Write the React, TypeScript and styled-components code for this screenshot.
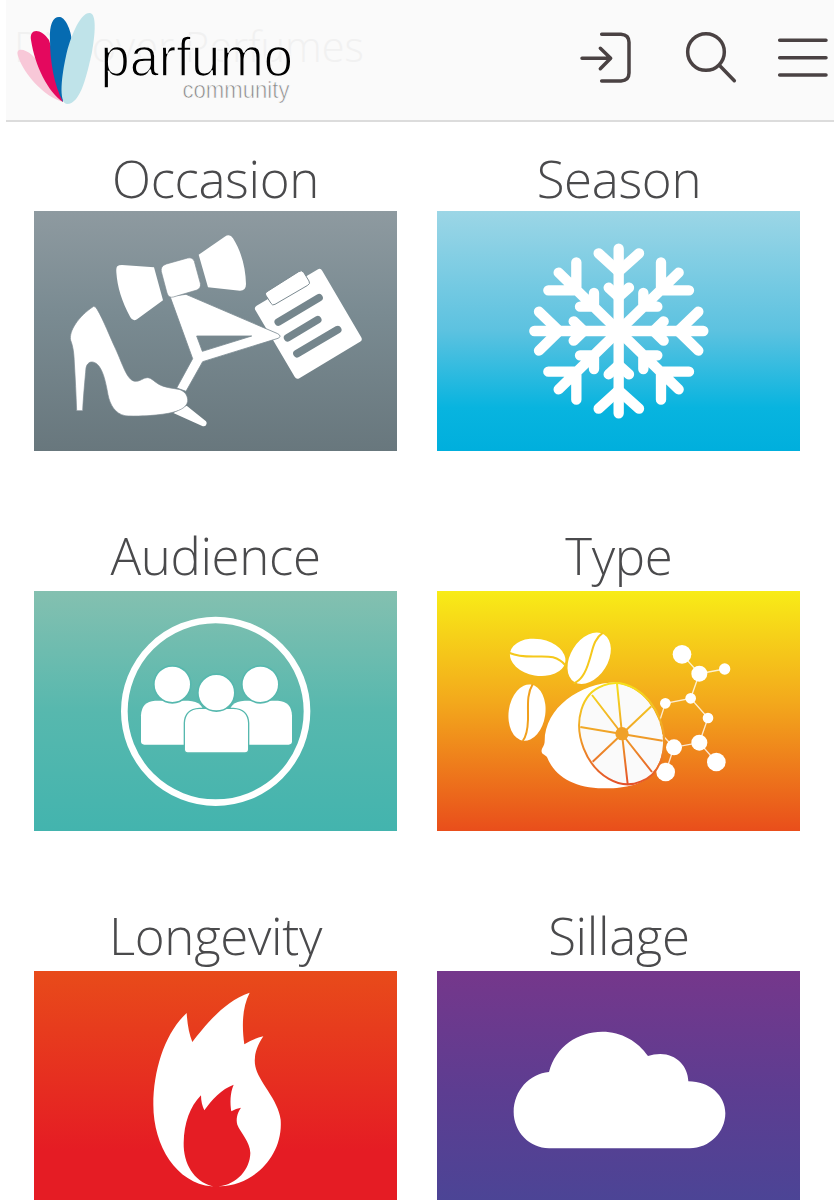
import React from "react";
import styled, { createGlobalStyle } from "styled-components";

const GlobalStyle = createGlobalStyle`
  * { box-sizing: border-box; }
  html, body { margin: 0; background: #fff; }
  body { font-family: "Open Sans", "Noto Sans", sans-serif; }
`;

const Page = styled.div`
  width: 834px;
  height: 1200px;
  padding-left: 6px;
  overflow: hidden;
  background: #fff;
`;

const Header = styled.header`
  position: relative;
  display: flex;
  justify-content: space-between;
  height: 122px;
  background: #fafafa;
  border-bottom: 2px solid #dcdcdc;
`;

const FadedTitle = styled.h1`
  position: absolute;
  left: 8px;
  top: 18px;
  margin: 0;
  font-size: 41.500px;
  line-height: 56px;
  font-weight: 300;
  white-space: nowrap;
  color: #f1f1f1;
`;

const Logo = styled.svg`
  position: relative;
  display: block;
  width: 300px;
  height: 120px;
`;

const Actions = styled.nav`
  display: flex;
  align-items: flex-start;
  padding: 31px 4px 0 0;
`;

const ActionButton = styled.button<{ $gap?: number; $drop?: number }>`
  display: block;
  padding: 0;
  border: 0;
  background: none;
  margin: ${(p) => p.$drop ?? 0}px 0 0 ${(p) => p.$gap ?? 0}px;
  svg {
    display: block;
    fill: none;
    stroke: #4a4243;
    stroke-width: 10.5;
    stroke-linecap: round;
    stroke-linejoin: round;
  }
`;

const Grid = styled.main`
  display: grid;
  grid-template-columns: 363px 363px;
  column-gap: 40.4px;
  row-gap: 73px;
  padding: 25px 0 0 28px;
`;

const Category = styled.section`
  display: flex;
  flex-direction: column;
`;

const Label = styled.h2<{ $space: number }>`
  position: relative;
  top: 1px;
  margin: 0 0 ${(p) => p.$space}px;
  font-size: 51px;
  letter-spacing: -0.35px;
  line-height: 60px;
  font-weight: 300;
  text-align: center;
  color: #4a4a4c;
`;

const Tile = styled.div<{ $fill: string }>`
  height: 240px;
  background: linear-gradient(to bottom, ${(p) => p.$fill});
  svg {
    display: block;
    width: 363px;
    height: 240px;
  }
`;

const OccasionArt = () => (
  <svg viewBox="12 184 1089 720" fill="#fff">
    <path d="M868 368L985 568L803 677L685 477Z" stroke="#fff" strokeWidth="20" strokeLinejoin="round" />
    <path d="M711 426L806 366Q815 360 821 368L837 394Q842 402 833 407L735 464Q727 469 723 461L707 436Q704 430 711 426Z" stroke="#7b8a91" strokeWidth="3" />
    <g stroke="#75868d" strokeWidth="23" strokeLinecap="round">
      <path d="M745 517L867 444M773 564L863 510M801 612L923 540" />
    </g>
    <path fillRule="evenodd" stroke="#7b8a91" strokeWidth="2.5" d="M420 440L468 434L743 552Q757 560 744 566L518 636L468 725L440 715L488 627ZM500 559L517 605L665 559Z" />
    <path d="M430 790L470 768L528 815Q533 821 528 827Q523 832 515 828Z" />
    <path d="M262 350Q266 346 276 346L372 353L399 452L321 509Q309 517 301 503C275 455 262 412 259 368Q258 354 262 350Z" />
    <path d="M506 315L584 261Q600 251 609 266C634 305 647 355 648 403Q648 423 630 423L534 413Z" />
    <path stroke="#7b8a91" strokeWidth="2" d="M409 343L473 325Q488 322 493 335L511 401Q514 415 501 421L430 442Q416 446 411 430L394 366Q390 350 409 343Z" />
    <path stroke="#7b8a91" strokeWidth="2" d="M191 470Q197 470 202 480C219 508 241 564 256 596C278 643 290 692 315 695C332 696 338 684 352 684C366 684 372 698 395 708C415 716 435 716 450 720C468 727 474 742 473 755C470 775 445 785 415 791C370 799 310 801 285 798C255 792 240 765 234 735C226 690 218 660 203 645C190 632 172 634 168 655C165 690 160 740 158 783L140 783C138 730 136 690 133 640C132 610 129 590 122 572C116 545 145 500 191 470Z" />
  </svg>
);

/* One quadrant arm, mirrored horizontally and vertically around the centre. */
const DiagonalArm = ({ flip }: { flip: string }) => (
  <path transform={`translate(567 544) scale(${flip})`} d="M0 0L-180-175M-127-206V-122H-211M-74-114V-73H-116M-74-96L-96-73" />
);

const SeasonArt = () => (
  <svg viewBox="22 184 1089 720" fill="none" stroke="#fff" strokeWidth="31" strokeLinecap="round" strokeLinejoin="round">
    <path d="M567 297V791M314 544H821" />
    <path d="M507 311L567 366L628 311M507 777L567 722L628 777" />
    <path d="M537 414L567 442L598 414M537 674L567 646L598 674" />
    <path d="M328 486L388 544L328 603M806 486L746 544L806 603" />
    <path d="M432 515L462 544L432 573M702 515L672 544L702 573" />
    <path d="M547 524L587 564M587 524L547 564" />
    {["1 1", "-1 1", "1 -1", "-1 -1"].map((f) => (
      <DiagonalArm key={f} flip={f} />
    ))}
  </svg>
);

const AudienceArt = () => (
  <svg viewBox="12 214 1089 720" fill="#fff">
    <circle cx="557" cy="575" r="274" fill="none" stroke="#fff" strokeWidth="20" />
    <path d="M375 543H475Q523 545 523 590V675H343Q333 675 333 665V587Q335 545 375 543Z" />
    <path d="M744 543H644Q596 545 596 590V675H776Q786 675 786 665V587Q784 545 744 543Z" />
    <g stroke="#56b8ae" strokeWidth="5">
      <circle cx="427" cy="494" r="55.5" />
      <circle cx="691" cy="494" r="55.5" />
      <path strokeWidth="4" d="M508 566H610Q654 568 656 610V689Q656 700 645 700H473Q463 700 463 689V610Q465 568 508 566Z" />
      <circle cx="559" cy="519" r="55.5" />
    </g>
  </svg>
);

const ATOMS = [
  [757, 404, 28], [809, 462, 24], [885, 448, 17], [783, 536, 16], [707, 551, 16],
  [835, 595, 16], [809, 669, 24], [860, 727, 28], [733, 683, 24], [708, 757, 28],
];

const TypeArt = () => (
  <svg viewBox="22 214 1089 720" fill="#fff">
    <defs>
      <linearGradient id="zest" gradientUnits="userSpaceOnUse" x1="575" y1="490" x2="575" y2="794">
        <stop offset="0" stopColor="#f6e11c" />
        <stop offset="0.5" stopColor="#f0a128" />
        <stop offset="1" stopColor="#e4512a" />
      </linearGradient>
    </defs>
    <ellipse cx="324" cy="413" rx="84" ry="55" transform="rotate(10 324 413)" />
    <ellipse cx="478.500" cy="416" rx="84" ry="56" transform="rotate(-58 478.500 416)" />
    <ellipse cx="292" cy="579" rx="55" ry="85" transform="rotate(8 292 579)" />
    <g fill="none" strokeWidth="6">
      <path stroke="#f5c81b" d="M240 400C285 420 335 405 370 413C390 418 400 428 408 438" />
      <path stroke="#f5c81b" d="M520 339C490 360 490 390 478 425C468 460 455 483 432 491" />
      <path stroke="#f1a01c" d="M309 494C290 525 296 560 295 600C294 630 290 650 279 664" />
    </g>
    <path stroke="#fff" strokeOpacity="0.8" strokeWidth="4" fill="none" d="M757 404L809 462L885 448M809 462L783 536L707 551L688 610M783 536L835 595L809 669L860 727M809 669L733 683L688 636M733 683L708 757" />
    {ATOMS.map(([x, y, r]) => (
      <circle key={`${x}-${y}`} cx={x} cy={y} r={r} />
    ))}
    <path d="M560 488C450 490 345 565 345 665C345 680 334 686 336 697C338 705 349 706 353 714C375 770 435 806 520 806C575 806 632 800 668 762L600 560Z" />
    <g stroke="url(#zest)" strokeWidth="6">
      <ellipse cx="576" cy="642" rx="118.700" ry="154.700" transform="rotate(-21.500 576 642)" fill="#fafafa" stroke="none" />
      <path
        fill="none"
        d="M519.400 498.100A118.700 154.700 -21.500 1 1 632.600 785.900A118.700 154.700 -21.500 1 1 519.400 498.100Z"
      />
      <path d="M577 643L562 492M577 643L665 560M577 643L699 663M577 643L667 757M577 643L594 793M577 643L489 726M577 643L452 622M577 643L487 526" />
    </g>
    <circle cx="577" cy="642" r="20" fill="#f0a128" />
  </svg>
);

const LongevityArt = () => (
  <svg viewBox="12 214 1089 720" fill="#fff">
    <path d="M470 340C472 375 478 405 487 427C520 385 580 305 659 279C635 325 636 385 643 434Q670 417 700 410C680 440 670 470 676 500C684 545 745 600 752 660C760 770 670 857 570 860H545C440 850 370 740 370 615C370 510 405 400 470 340Z" />
    <path fill="#e51d24" d="M513 587C513 605 517 620 523 632C545 600 575 568 611 555C600 580 600 610 604 635Q618 626 633 624C620 642 618 660 622 675C632 700 660 725 661 760C660 810 620 854 568 860L568 862H548L548 860C490 845 460 790 461 730C462 670 480 620 513 587Z" />
  </svg>
);

const SillageArt = () => (
  <svg viewBox="22 214 1089 720" fill="#fff">
    <path d="M358 746C300 745 252 697 252 637C252 573 300 522 358 517C378 440 445 396 518 396C575 396 625 425 655 469Q672 463 692 463C740 463 775 500 776 545C840 545 887 588 887 641C887 697 840 746 780 746Z" />
  </svg>
);

const CATEGORIES = [
  { name: "Occasion", space: 4, fill: "#8e9aa0, #7a8b92 42%, #68777d", art: <OccasionArt /> },
  { name: "Season", space: 4, fill: "#9cd6e6, #5cc2e0 50%, #08b4df 82%, #00afdd", art: <SeasonArt /> },
  { name: "Audience", space: 7, fill: "#84c0b0, #57b8ae 50%, #43b4ae", art: <AudienceArt /> },
  { name: "Type", space: 7, fill: "#f8ec17, #f3a91c 46%, #e94e1b", art: <TypeArt /> },
  { name: "Longevity", space: 7, fill: "#e84b1a, #e51c24 75%, #e51c24", art: <LongevityArt /> },
  { name: "Sillage", space: 7, fill: "#75378b, #5d3d91 50%, #4a4596", art: <SillageArt /> },
];

export default function App() {
  return (
    <Page>
      <GlobalStyle />
      <Header>
        <FadedTitle>Discover Perfumes</FadedTitle>
        <Logo viewBox="6 0 300 120">
          <path fill="#f8c8d8" d="M18 56C15 47 25 49 32 55C43 65 53 84 63 102C45 97 24 75 18 56Z" />
          <path fill="#e4085e" d="M31 40C29 28 41 28 49 40C55 58 59 83 63 102C48 92 35 66 31 40Z" />
          <path fill="#066bb1" d="M50 40C49 23 54 16 60 17C66 18 72 32 72 44C71 66 66 83 63 102C54 85 50 61 50 40Z" />
          <path fill="#bfe3e9" d="M90 13C97 14 95 36 92 52C87 74 81 104 67 104C58 103 62 74 66 56C70 38 80 12 90 13Z" />
          <g fontFamily="Liberation Sans, Arial, sans-serif" stroke="#fafafa">
            <text x="100.500" y="75.500" fontSize="55" fill="#000" strokeWidth="1.500" textLength="192.500" lengthAdjust="spacingAndGlyphs">parfumo</text>
            <text x="182.500" y="97.500" fontSize="24.500" fill="#858585" strokeWidth="0.700" textLength="107" lengthAdjust="spacingAndGlyphs">community</text>
          </g>
        </Logo>
        <Actions>
          <ActionButton aria-label="Log in">
            <svg width="52" height="52" viewBox="60 93 156 156">
              <path d="M125 103H183Q207 105 207 127V219Q207 241 183 243H125M66 175H151M121 145L152 175L121 206" />
            </svg>
          </ActionButton>
          <ActionButton aria-label="Search" $gap={52}>
            <svg width="54" height="54" viewBox="372 93 162 162">
              <circle cx="438" cy="156" r="55" />
              <path d="M478 196L523 242" />
            </svg>
          </ActionButton>
          <ActionButton aria-label="Menu" $gap={38} $drop={5}>
            <svg width="54" height="44" viewBox="648 108 162 132">
              <path d="M659 121H798M659 173H798M659 225H798" />
            </svg>
          </ActionButton>
        </Actions>
      </Header>
      <Grid>
        {CATEGORIES.map((c) => (
          <Category key={c.name}>
            <Label $space={c.space}>{c.name}</Label>
            <Tile $fill={c.fill}>{c.art}</Tile>
          </Category>
        ))}
      </Grid>
    </Page>
  );
}
